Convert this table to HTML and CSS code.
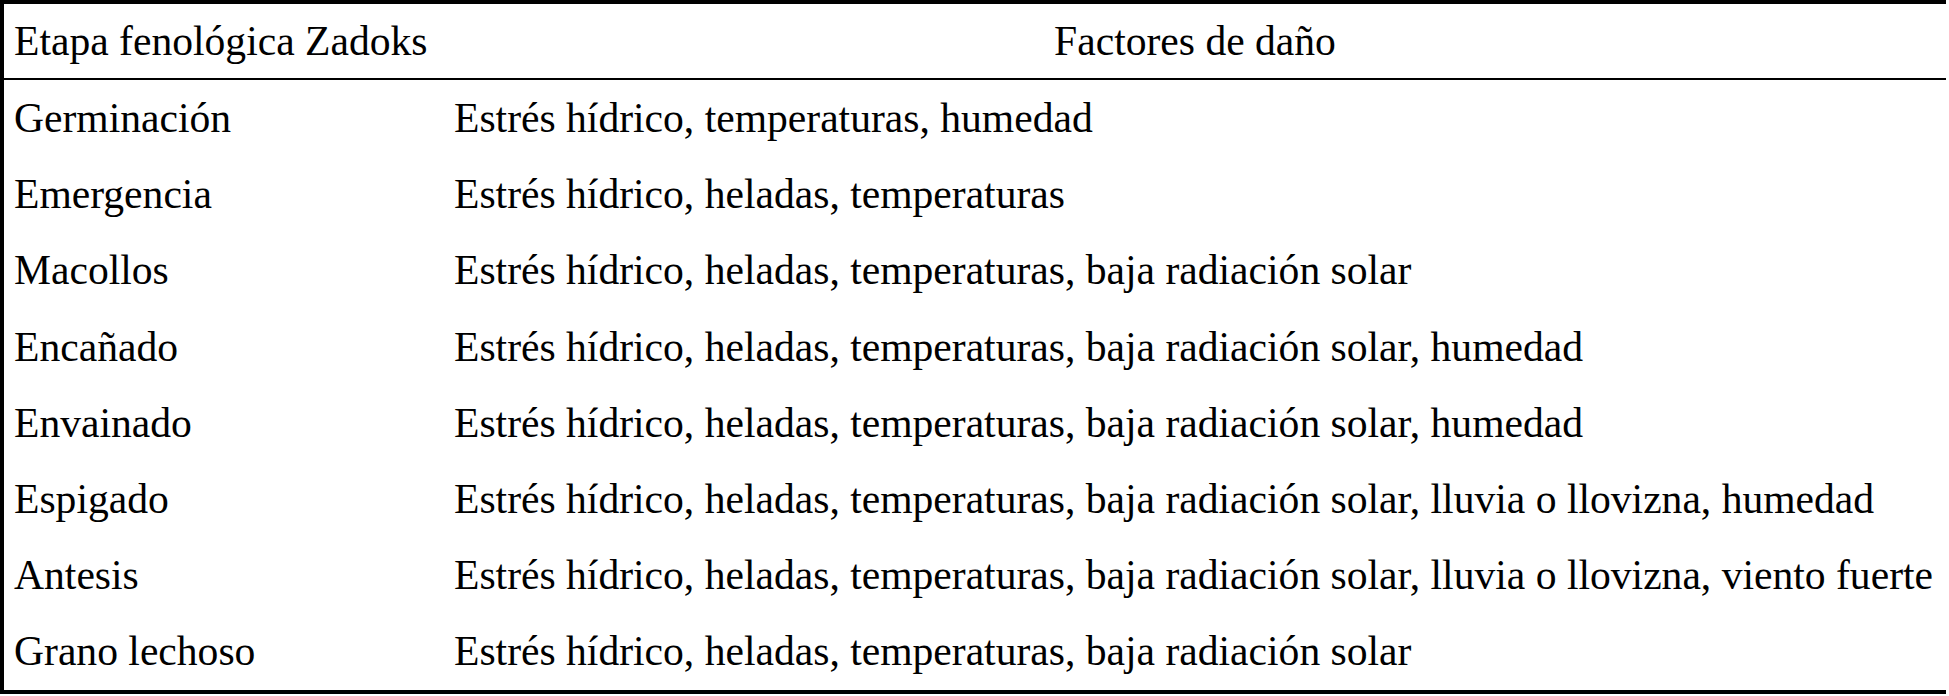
FILE: index.html
```html
<!DOCTYPE html>
<html lang="es">
<head>
<meta charset="utf-8">
<title>Etapas fenológicas y factores de daño</title>
<link rel="stylesheet" href="styles.css">
</head>
<body>
<table class="damage-table">
  <colgroup>
    <col class="col-stage">
    <col class="col-factors">
  </colgroup>
  <thead>
    <tr>
      <th class="head-stage">Etapa fenológica Zadoks</th>
      <th class="head-factors">Factores de daño</th>
    </tr>
  </thead>
  <tbody>
    <tr><td>Germinación</td><td>Estrés hídrico, temperaturas, humedad</td></tr>
    <tr><td>Emergencia</td><td>Estrés hídrico, heladas, temperaturas</td></tr>
    <tr><td>Macollos</td><td>Estrés hídrico, heladas, temperaturas, baja radiación solar</td></tr>
    <tr><td>Encañado</td><td>Estrés hídrico, heladas, temperaturas, baja radiación solar, humedad</td></tr>
    <tr><td>Envainado</td><td>Estrés hídrico, heladas, temperaturas, baja radiación solar, humedad</td></tr>
    <tr><td>Espigado</td><td>Estrés hídrico, heladas, temperaturas, baja radiación solar, lluvia o llovizna, humedad</td></tr>
    <tr><td>Antesis</td><td>Estrés hídrico, heladas, temperaturas, baja radiación solar, lluvia o llovizna, viento fuerte</td></tr>
    <tr><td>Grano lechoso</td><td>Estrés hídrico, heladas, temperaturas, baja radiación solar</td></tr>
  </tbody>
</table>
</body>
</html>
```
FILE: styles.css
```css
html, body {
  margin: 0;
  padding: 0;
  background: #ffffff;
}

body {
  font-family: "Liberation Serif", "Times New Roman", serif;
  font-size: 41.6px;
  color: #000000;
}

.damage-table {
  table-layout: fixed;
  border-collapse: separate;
  border-spacing: 0;
  width: 1946px;
  border-top: 4px solid #000000;
  border-left: 4px solid #000000;
  border-bottom: 4px solid #000000;
}

.col-stage {
  width: 440px;
}

.damage-table th,
.damage-table td {
  padding: 0 10px;
  white-space: nowrap;
  vertical-align: middle;
  font-weight: normal;
  box-sizing: border-box;
}

.damage-table th {
  height: 76px;
  line-height: 74px;
  border-bottom: 2px solid #000000;
}

.head-stage {
  text-align: left;
}

.head-factors {
  text-align: center;
  padding-left: 20px;
}

.damage-table td {
  height: 76.2px;
  line-height: 76px;
  text-align: left;
}
```
